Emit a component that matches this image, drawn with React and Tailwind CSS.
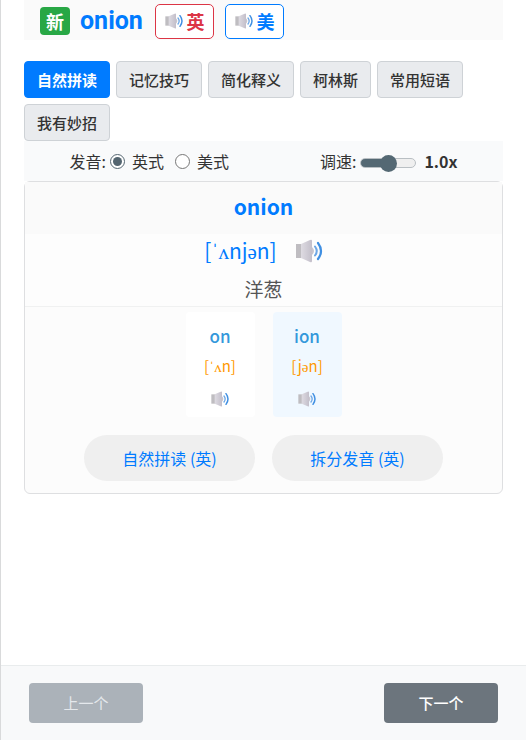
import React, { useState } from 'react';
import clsx from 'clsx';

const TABS = ['自然拼读', '记忆技巧', '简化释义', '柯林斯', '常用短语', '我有妙招'];

const SYLLABLES = [
  { text: 'on', before: '[ˈ', vowel: 'ʌ', after: 'n]' },
  { text: 'ion', before: '[j', vowel: 'ə', after: 'n]' },
];

function Speaker({ className }) {
  return (
    <svg viewBox="0 0 28 24" className={className} aria-hidden="true">
      <defs>
        <linearGradient id="cone" x1="0" x2="1">
          <stop offset="0" stopColor="#dedbe2" />
          <stop offset="1" stopColor="#c3bfca" />
        </linearGradient>
      </defs>
      <path d="M1 5h6v14H1z" fill="#bfbdc1" />
      <path d="M6 5L15 1Q17 0 17 2V22Q17 24 15 23L6 19Z" fill="url(#cone)" />
      <path d="M17 8q4 4 0 8" fill="#c9c5ce" />
      <path d="M20 7.500q3.500 4.500 0 9" fill="none" stroke="#6da7e6" strokeWidth="2" strokeLinecap="round" />
      <path d="M23 4q6 8 0 16" fill="none" stroke="#3f8fe2" strokeWidth="2.200" strokeLinecap="round" />
    </svg>
  );
}

function Phonetic({ before, vowel, after }) {
  return (
    <span>
      {before}
      <span className="font-['Liberation_Serif',serif]">{vowel}</span>
      {after}
    </span>
  );
}

function WordHeader() {
  return (
    <header className="flex h-10 items-center bg-[#fafafa] px-4 pt-0.5">
      <span className="flex h-7 w-[30px] items-center justify-center rounded bg-[#28a745] text-lg leading-none font-bold text-white">
        新
      </span>
      <h1 className="ml-2.5 font-['Roboto',sans-serif] text-[25px] leading-8 font-bold text-[#007bff]">onion</h1>
      <button
        type="button"
        className="ml-3 flex h-[35px] w-[59px] items-center justify-center gap-0.5 rounded-[5px] border border-[#dc3545] bg-white text-lg leading-none font-bold text-[#dc3545]"
      >
        <Speaker className="h-4 w-5" />
        英
      </button>
      <button
        type="button"
        className="ml-[11px] flex h-[35px] w-[59px] items-center justify-center gap-0.5 rounded-[5px] border border-[#007bff] bg-white text-lg leading-none font-bold text-[#007bff]"
      >
        <Speaker className="h-4 w-5" />
        美
      </button>
    </header>
  );
}

function Controls({ accent, setAccent, speed, setSpeed }) {
  const fill = (speed - 0.5) * 100;
  return (
    <div className="flex h-10 items-center justify-around bg-[#f9fafb] text-base text-[#333]">
      <div className="flex items-center">
        <span>发音:</span>
        <label className="ml-1 flex items-center gap-[7px]">
          <input
            type="radio"
            name="accent"
            className="size-[15px] accent-[#546570]"
            checked={accent === 'uk'}
            onChange={() => setAccent('uk')}
          />
          英式
        </label>
        <label className="ml-[11px] flex items-center gap-[7px]">
          <input
            type="radio"
            name="accent"
            className="size-[15px] accent-[#546570]"
            checked={accent === 'us'}
            onChange={() => setAccent('us')}
          />
          美式
        </label>
      </div>
      <div className="flex items-center">
        <label htmlFor="speed">调速:</label>
        <input
          id="speed"
          type="range"
          min="0.5"
          max="1.5"
          step="0.1"
          value={speed}
          onChange={(e) => setSpeed(Number(e.target.value))}
          style={{
            backgroundImage: `linear-gradient(to right, #546873 ${fill}%, #efefef ${fill}%)`,
          }}
          className="mt-1 ml-1 h-2.5 w-14 appearance-none rounded-full border border-[#b9bfc3] [&::-webkit-slider-thumb]:size-[17px] [&::-webkit-slider-thumb]:appearance-none [&::-webkit-slider-thumb]:rounded-full [&::-webkit-slider-thumb]:bg-[#546873]"
        />
        <span className="ml-2 font-bold">
          {speed.toFixed(1)}
          x
        </span>
      </div>
    </div>
  );
}

export default function App() {
  const [tab, setTab] = useState(TABS[0]);
  const [accent, setAccent] = useState('uk');
  const [speed, setSpeed] = useState(1);

  return (
    <div className="flex min-h-screen flex-col border-l border-[#d9dadb] bg-white font-['Noto_Sans_CJK_SC',sans-serif] text-[#333]">
      <main className="flex-1 pr-[23px] pl-[23px]">
        <WordHeader />
        <nav className="mt-[21px] flex flex-wrap gap-1.5">
          {TABS.map((t) => (
            <button
              key={t}
              type="button"
              onClick={() => setTab(t)}
              className={clsx(
                'h-[37px] rounded border px-3 text-[15px] leading-5',
                t === tab
                  ? 'border-[#007bff] bg-[#007bff] font-bold text-white'
                  : 'border-[#ced2d6] bg-[#e9ebee] font-medium',
              )}
            >
              {t}
            </button>
          ))}
        </nav>
        <Controls accent={accent} setAccent={setAccent} speed={speed} setSpeed={setSpeed} />
        <section className="rounded-md border border-[#dedfe1] bg-[#fcfcfc] pb-3">
          <h2 className="bg-[#fafafa] pt-2 pb-3 text-center text-[21px] leading-8 font-bold text-[#007bff]">
            onion
          </h2>
          <div className="border-b border-[#f0f1f1] bg-[#fdfdfd]">
            <div className="flex h-[34px] items-center justify-center gap-[18px] text-[21px] leading-8 text-[#007bff]">
              <Phonetic before="[ˈ" vowel="ʌ" after={<>nj<span className="font-['Liberation_Serif',serif]">ə</span>n]</>} />
              <button type="button" aria-label="播放 onion">
                <Speaker className="h-6 w-7" />
              </button>
            </div>
            <p className="pt-[7px] pb-[3px] text-center text-[19px] leading-7 text-[#555]">洋葱</p>
          </div>
          <div className="mt-[5px] flex justify-center gap-[18px]">
            {SYLLABLES.map((s, i) => (
              <div
                key={s.text}
                className={clsx(
                  'flex h-[105px] w-[69px] flex-col items-center rounded pt-3',
                  i === 1 ? 'bg-[#f0f8ff]' : 'bg-white',
                )}
              >
                <span className="text-[17px] leading-6 font-medium text-[#3498db]">{s.text}</span>
                <span className="mt-1.5 text-[15px] leading-6 text-[#ff9800]">
                  <Phonetic before={s.before} vowel={s.vowel} after={s.after} />
                </span>
                <button type="button" className="mt-3" aria-label={`播放 ${s.text}`}>
                  <Speaker className="h-4 w-5" />
                </button>
              </div>
            ))}
          </div>
          <div className="mt-[18px] flex justify-center gap-[17px]">
            <button type="button" className="h-[46px] w-[171px] rounded-full bg-[#efefef] text-base text-[#007bff]">
              自然拼读 (英)
            </button>
            <button type="button" className="h-[46px] w-[171px] rounded-full bg-[#efefef] text-base text-[#007bff]">
              拆分发音 (英)
            </button>
          </div>
        </section>
      </main>
      <footer className="flex justify-between border-t border-[#e9eced] bg-[#f8f9fa] px-7 py-[17px]">
        <button type="button" disabled className="h-10 w-[114px] rounded bg-[#abb2b9] text-[15px] text-[#e4e8ec]">
          上一个
        </button>
        <button type="button" className="h-10 w-[114px] rounded bg-[#6c757d] text-[15px] font-medium text-white">
          下一个
        </button>
      </footer>
    </div>
  );
}
